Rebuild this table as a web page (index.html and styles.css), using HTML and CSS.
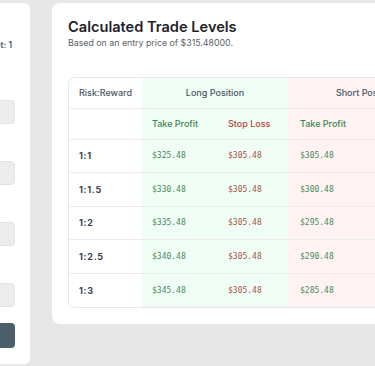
FILE: index.html
```html
<!DOCTYPE html>
<html lang="en">
<head>
<meta charset="utf-8">
<title>Trade Levels</title>
<link rel="stylesheet" href="styles.css">
</head>
<body>
<div class="layout">
  <aside class="panel">
    <h2 class="panel-title">Inputs</h2>
    <p class="panel-note">Ratio target: 1</p>
    <div class="field">
      <label class="field-label">Entry</label>
      <div class="input"></div>
    </div>
    <div class="field">
      <label class="field-label">Stop</label>
      <div class="input"></div>
    </div>
    <div class="field">
      <label class="field-label">Size</label>
      <div class="input"></div>
    </div>
    <div class="field">
      <label class="field-label">Risk</label>
      <div class="input"></div>
    </div>
    <button class="btn">Calculate</button>
  </aside>
  <main class="card">
    <h1 class="title">Calculated Trade Levels</h1>
    <p class="subtitle">Based on an entry price of $315.48000.</p>
    <div class="table-wrap">
      <table class="levels">
        <colgroup>
          <col class="c-rr"><col class="c-a"><col class="c-b"><col class="c-sa"><col class="c-sb">
        </colgroup>
        <thead>
          <tr class="row-h1">
            <th class="rr-head">Risk:Reward</th>
            <th class="long group" colspan="2">Long Position</th>
            <th class="short group" colspan="2">Short Position</th>
          </tr>
          <tr class="row-h2">
            <th></th>
            <th class="long sub tp">Take Profit</th>
            <th class="long sub sl">Stop Loss</th>
            <th class="short sub tp">Take Profit</th>
            <th class="short sub sl">Stop Loss</th>
          </tr>
        </thead>
        <tbody>
          <tr><td class="rr">1:1</td><td class="long p tp">$325.48</td><td class="long p sl">$305.48</td><td class="short p tp">$305.48</td><td class="short p sl">$325.48</td></tr>
          <tr><td class="rr">1:1.5</td><td class="long p tp">$330.48</td><td class="long p sl">$305.48</td><td class="short p tp">$300.48</td><td class="short p sl">$325.48</td></tr>
          <tr><td class="rr">1:2</td><td class="long p tp">$335.48</td><td class="long p sl">$305.48</td><td class="short p tp">$295.48</td><td class="short p sl">$325.48</td></tr>
          <tr><td class="rr">1:2.5</td><td class="long p tp">$340.48</td><td class="long p sl">$305.48</td><td class="short p tp">$290.48</td><td class="short p sl">$325.48</td></tr>
          <tr><td class="rr">1:3</td><td class="long p tp">$345.48</td><td class="long p sl">$305.48</td><td class="short p tp">$285.48</td><td class="short p sl">$325.48</td></tr>
        </tbody>
      </table>
    </div>
  </main>
</div>
</body>
</html>
```
FILE: styles.css
```css
* { box-sizing: border-box; }
html, body {
  margin: 0;
  padding: 0;
  background: #e7e7e7;
  font-family: Inter, "Liberation Sans", sans-serif;
  overflow: hidden;
}
.layout {
  display: flex;
  align-items: flex-start;
  gap: 22px;
  padding-top: 3px;
  margin-left: -180px;
  width: 900px;
}
.panel {
  flex: 0 0 210px;
  background: #fff;
  border-radius: 6px;
  padding: 16px 15px 16px 16px;
  display: flex;
  flex-direction: column;
}
.panel-title {
  margin: 0;
  font-size: 13px;
  line-height: 18px;
  font-weight: 700;
  color: #1f2328;
}
.panel-note {
  margin: 2px 0 0;
  font-size: 8.5px;
  line-height: 12px;
  font-weight: 600;
  color: #4b5563;
  text-align: right;
  padding-right: 3px;
}
.field {
  display: flex;
  flex-direction: column;
  gap: 4px;
  margin-top: 20px;
}
.panel-note + .field { margin-top: 32px; }
.field-label {
  font-size: 9px;
  line-height: 13px;
  color: #374151;
}
.input {
  height: 24px;
  background: #ececec;
  border: 1px solid #e3e3e3;
  border-radius: 4px;
}
.btn {
  margin-top: 16px;
  height: 25px;
  border: 0;
  border-radius: 4px;
  background: #4b5f6b;
  color: #fff;
  font-family: inherit;
  font-size: 10px;
  font-weight: 600;
}
.card {
  flex: 0 0 410px;
  background: #fff;
  border-radius: 8px;
  padding: 15px 16px 16px;
}
.title {
  margin: 0;
  font-size: 14.6px;
  line-height: 18px;
  font-weight: 600;
  color: #1f2328;
}
.subtitle {
  margin: 0;
  font-size: 8.8px;
  line-height: 13px;
  color: #5b6068;
}
.table-wrap {
  margin-top: 28px;
  border: 1px solid #e6e7e9;
  border-radius: 6px;
  overflow: hidden;
  width: 377px;
}
.levels {
  border-collapse: collapse;
  width: 375px;
  table-layout: fixed;
}
.c-rr { width: 73px; }
.c-a { width: 76px; }
.c-b { width: 70px; }
.c-sa { width: 82px; }
.c-sb { width: 74px; }
.levels th, .levels td {
  padding: 0 10px;
  text-align: left;
  border-bottom: 1px solid #ececec;
}
.levels tbody tr:last-child td { border-bottom: 0; }
.row-h1 th { height: 30px; }
.row-h2 th { height: 31px; }
.levels tbody td { height: 33.6px; }
.rr-head {
  font-size: 9px;
  font-weight: 500;
  color: #4b5563;
}
.group {
  text-align: center !important;
  font-size: 9px;
  font-weight: 500;
  color: #4b5563;
}
.sub {
  font-size: 9px;
  font-weight: 500;
}
.levels .short.tp { padding-left: 12px; }
.long { background: #f0fdf4; }
.short { background: #fef2f2; }
.sub.tp { color: #3b8552; }
.sub.sl { color: #b5483e; }
.rr {
  font-size: 9px;
  font-weight: 700;
  color: #374151;
  letter-spacing: 0.7px;
}
.p {
  font-family: "DejaVu Sans Mono", "Liberation Mono", monospace;
  font-size: 8px;
}
.p.tp { color: #4a8a5e; }
.p.sl { color: #a4544a; }
```
